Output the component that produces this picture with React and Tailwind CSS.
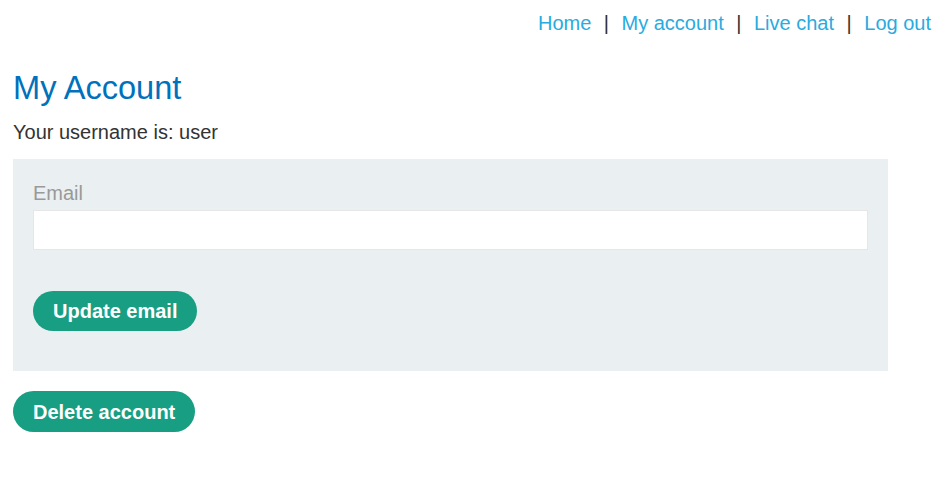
import React from "react";

const links = ["Home", "My account", "Live chat", "Log out"];

const App = () => {
  return (
    <div className="min-h-[479px] bg-white px-[13px] pb-10 font-['Liberation_Sans',Arial,sans-serif] text-[#333332]">
      {/* Top nav */}
      <nav className="flex justify-end items-center pt-[10px] pr-[4px] text-[20px] leading-[26px]">
        {links.map((label, i) => (
          <React.Fragment key={label}>
            {i > 0 && <span className="px-[12.5px] text-[#333332]">|</span>}
            <a href="#" className="text-[#29abe0]">
              {label}
            </a>
          </React.Fragment>
        ))}
      </nav>

      <h1 className="mt-[32px] text-[32.6px] leading-[40px] text-[#0071bc]">My Account</h1>
      <p className="mt-[12px] text-[20px] leading-[24px]">Your username is: user</p>

      {/* Email form */}
      <form className="mt-[15px] w-[875px] bg-[#eaeff1] px-[20px] pt-[22px] pb-[40px]">
        <label className="block text-[20px] leading-[24px] text-[#999]">Email</label>
        <input
          type="email"
          className="mt-[5px] block h-[40px] w-full border border-[#e6e6e6] bg-white outline-none"
        />
        <button
          type="button"
          className="mt-[41px] h-[40px] rounded-full bg-[#189e82] px-[20px] text-[20px] font-bold text-white"
        >
          Update email
        </button>
      </form>

      <button
        type="button"
        className="mt-[20px] h-[41px] rounded-full bg-[#189e82] px-[20px] text-[20px] font-bold text-white"
      >
        Delete account
      </button>
    </div>
  );
};

export default App;
